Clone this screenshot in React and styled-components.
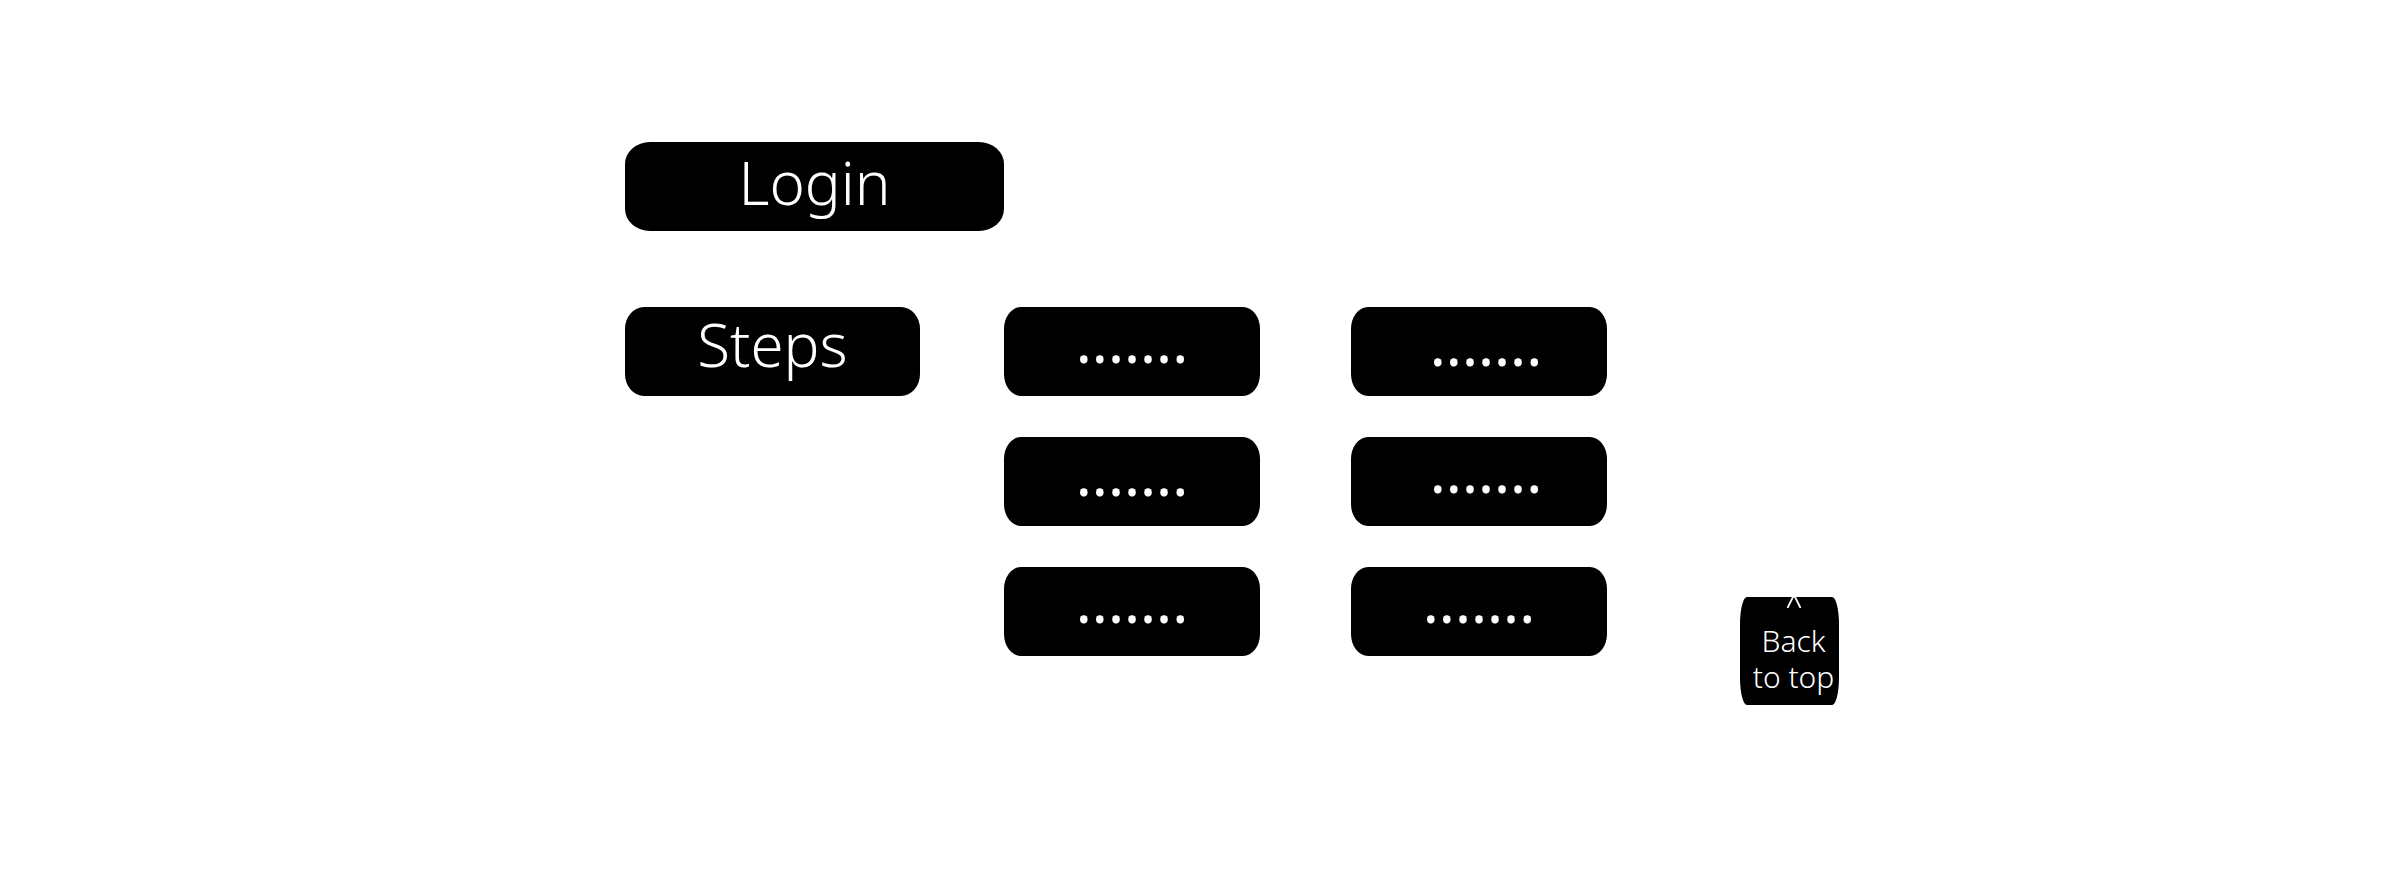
import React from "react";
import styled, { createGlobalStyle } from "styled-components";

const GlobalStyle = createGlobalStyle`
  * { box-sizing: border-box; }
  body {
    margin: 0;
    background: #fff;
    font-family: "Noto Sans", Lato, sans-serif;
    font-weight: 350;
  }
`;

const Page = styled.main`
  padding: 142px 0 168px 64px;
`;

const Content = styled.div`
  max-width: 1214px;
  margin: 0 auto;
  display: flex;
  flex-direction: column;
  gap: 76px;
`;

const StepsArea = styled.section`
  display: flex;
  align-items: flex-start;
`;

const StepsLabel = styled.div`
  flex: 0 1 379px;
`;

const StepGrid = styled.div`
  display: grid;
  grid-template-columns: repeat(2, minmax(0, 256px));
  gap: 41px 91px;
`;

const Pill = styled.button`
  display: flex;
  align-items: flex-start;
  justify-content: center;
  width: 100%;
  height: 89px;
  padding: 0;
  border: 0;
  background: #000;
  color: #fff;
  font: inherit;
  font-size: 60px;
  line-height: 74px;
  cursor: pointer;
`;

const LoginButton = styled(Pill)`
  max-width: 379px;
  border-radius: 25px / 22px;
  line-height: 80px;
`;

const StepsButton = styled(Pill)`
  max-width: 295px;
  border-radius: 19px / 22px;
`;

const StepButton = styled(Pill)`
  border-radius: 17px / 22px;
  padding-left: ${(p) => (p.$indented ? 14 : 0)}px;
  padding-top: ${(p) => (p.$low ? 3 : 0)}px;
  font-weight: 400;
  line-height: 66px;
`;

const BackToTop = styled.button`
  flex: none;
  display: flex;
  flex-direction: column;
  align-items: center;
  justify-content: space-between;
  width: 99px;
  height: 108px;
  margin: 290px 0 0 auto;
  padding: 0 0 10px 8px;
  border: 0;
  border-radius: 7px / 27px;
  background: #000;
  color: #fff;
  font: inherit;
  font-size: 30px;
  line-height: 36px;
  cursor: pointer;
`;

const BackLabel = styled.span`
  display: flex;
  flex-direction: column;
  align-items: center;
  white-space: nowrap;
`;

const Caret = () => (
  <svg width="16" height="11" viewBox="0 0 16 11" fill="none" stroke="currentColor" strokeWidth="1.8" aria-hidden="true">
    <path d="M1.5 11 L7.2 -0.5 H8.8 L14.5 11" />
  </svg>
);

const steps = [
  { id: 1 },
  { id: 2, indented: true, low: true },
  { id: 3, low: true },
  { id: 4, indented: true },
  { id: 5 },
  { id: 6 },
];

export default function App() {
  return (
    <>
      <GlobalStyle />
      <Page>
        <Content>
          <LoginButton type="button">Login</LoginButton>
          <StepsArea>
            <StepsLabel>
              <StepsButton type="button">Steps</StepsButton>
            </StepsLabel>
            <StepGrid>
              {steps.map((step) => (
                <StepButton
                  key={step.id}
                  type="button"
                  $indented={step.indented}
                  $low={step.low}
                >
                  .......
                </StepButton>
              ))}
            </StepGrid>
            <BackToTop type="button" onClick={() => window.scrollTo({ top: 0 })}>
              <Caret />
              <BackLabel>
                <span>Back</span>
                <span>to top</span>
              </BackLabel>
            </BackToTop>
          </StepsArea>
        </Content>
      </Page>
    </>
  );
}
